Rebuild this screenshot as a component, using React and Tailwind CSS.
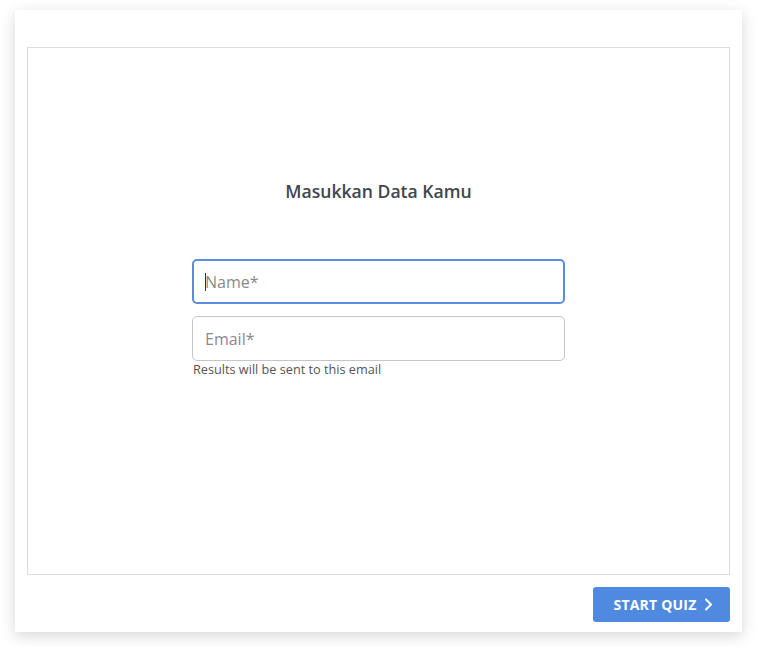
import React from "react";

export default function App() {
  return (
    <div className="min-h-[653px] w-[758px] bg-white pt-[10px] pl-[15px]" style={{ fontFamily: '"Open Sans", "Liberation Sans", sans-serif' }}>
      <div className="flex h-[622px] w-[727px] flex-col bg-white px-[12px] pt-[37px] pb-[10px] shadow-[0_4px_14px_rgba(0,0,0,0.16)]">
        <div className="flex h-[528px] flex-col items-center border border-[#dcdcdc] pt-[131px]">
          <h1 className="text-[17.6px] leading-[24px] font-semibold text-[#3f4650]">Masukkan Data Kamu</h1>
          <div className="mt-[56px] flex w-[373px] flex-col">
            <div className="relative">
              <input
                type="text"
                placeholder="Name*"
                className="h-[45px] w-full rounded-[5px] border-2 border-[#5a8ddf] px-[11px] text-[16px] text-[#333] outline-none placeholder:text-[#8a8a8a]"
              />
              <span className="absolute top-[14px] left-[13px] h-[18px] w-px bg-[#333]" />
            </div>
            <input
              type="text"
              placeholder="Email*"
              className="mt-[12px] h-[45px] w-full rounded-[5px] border border-[#c6c6c6] px-[12px] text-[16px] text-[#333] outline-none placeholder:text-[#8a8a8a]"
            />
            <p className="mt-0 pl-[1px] text-[12.7px] leading-[16px] text-[#555]">Results will be sent to this email</p>
          </div>
        </div>
        <div className="mt-[12px] flex justify-end">
          <button className="flex h-[35px] w-[137px] items-center justify-center gap-[8px] rounded-[3px] bg-[#5089e0] pl-[4px] text-[14px] font-bold tracking-[0.2px] text-white">
            START QUIZ
            <svg width="9" height="13" viewBox="0 0 9 13" fill="none">
              <path d="M2 1.5 L7 6.5 L2 11.5" stroke="white" strokeWidth="2" strokeLinecap="round" strokeLinejoin="round" />
            </svg>
          </button>
        </div>
      </div>
    </div>
  );
}
